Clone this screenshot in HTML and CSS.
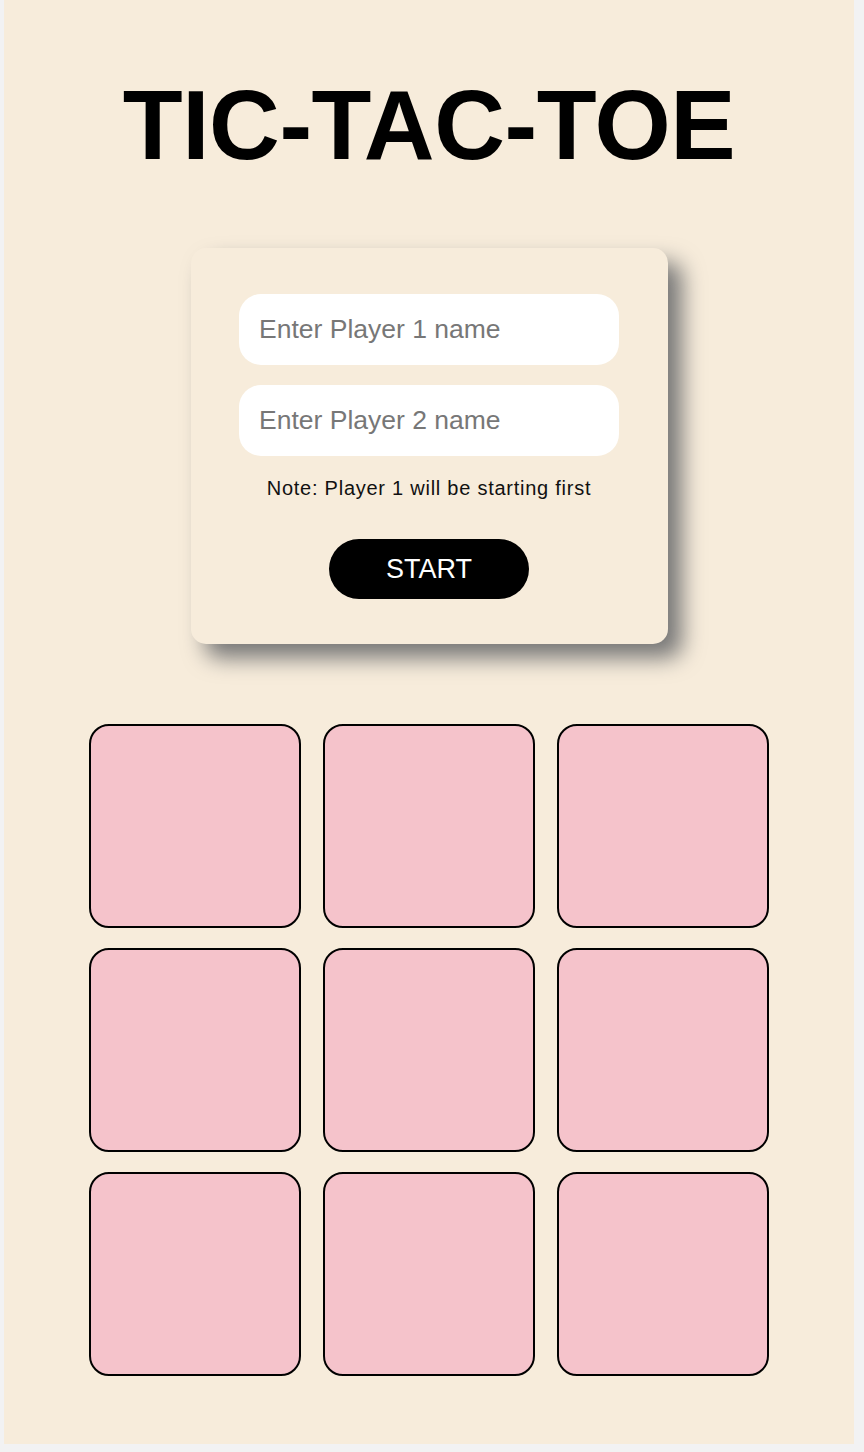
FILE: index.html
```html
<!DOCTYPE html>
<html lang="en">
<head>
    <meta charset="UTF-8">
    <meta name="viewport" content="width=device-width, initial-scale=1.0">
    <title>Tic-Tac-Toe</title>
    <link rel="stylesheet" href="styles.css">
</head>
<body>
    <div class="page">
        <h1>TIC-TAC-TOE</h1>

        <div class="setup-card">
            <input type="text" id="player1" placeholder="Enter Player 1 name">
            <input type="text" id="player2" placeholder="Enter Player 2 name">
            <p class="note">Note: Player 1 will be starting first</p>
            <button id="start-button">START</button>
        </div>

        <div class="board">
            <div class="cell"></div>
            <div class="cell"></div>
            <div class="cell"></div>
            <div class="cell"></div>
            <div class="cell"></div>
            <div class="cell"></div>
            <div class="cell"></div>
            <div class="cell"></div>
            <div class="cell"></div>
        </div>
    </div>
</body>
</html>
```

FILE: styles.css
```css
/* General Styles */
body {
    margin: 0;
    padding: 0 10px 9px 4px;
    background-color: #f2f2f3;
    font-family: 'Liberation Sans', Arial, sans-serif;
}

.page {
    background-color: #f7ecdb;
    display: flex;
    flex-direction: column;
    align-items: center;
    padding: 72px 0 68px;
}

h1 {
    margin: 0;
    font-size: 98px;
    font-weight: bold;
    letter-spacing: -0.4px;
    line-height: 106px;
    color: #000;
}

/* Player setup */
.setup-card {
    margin-top: 70px;
    width: 477px;
    box-sizing: border-box;
    padding: 46px 48px 45px;
    border-radius: 15px;
    background-color: #f7ecdb;
    box-shadow: 14px 14px 22px #777;
    display: flex;
    flex-direction: column;
    align-items: center;
}

.setup-card input {
    width: 380px;
    height: 71px;
    box-sizing: border-box;
    border: none;
    border-radius: 22px;
    padding: 0 20px;
    margin-bottom: 20px;
    background-color: #fff;
    font-family: 'Liberation Sans', Arial, sans-serif;
    font-size: 26.5px;
    outline: none;
}

.setup-card input::placeholder {
    color: #777;
}

.note {
    margin: 1px 0 0;
    font-size: 20px;
    letter-spacing: 0.75px;
    color: #111;
}

#start-button {
    margin-top: 39px;
    width: 200px;
    height: 60px;
    border: none;
    border-radius: 30px;
    background-color: #000;
    color: #fff;
    font-family: 'Liberation Sans', Arial, sans-serif;
    font-size: 27px;
    cursor: pointer;
}

/* Board */
.board {
    margin-top: 80px;
    display: grid;
    grid-template-columns: repeat(3, 212px);
    grid-auto-rows: 204px;
    gap: 20px 22px;
}

.cell {
    background-color: #f5c3cb;
    border: 2px solid #000;
    border-radius: 20px;
}
```
